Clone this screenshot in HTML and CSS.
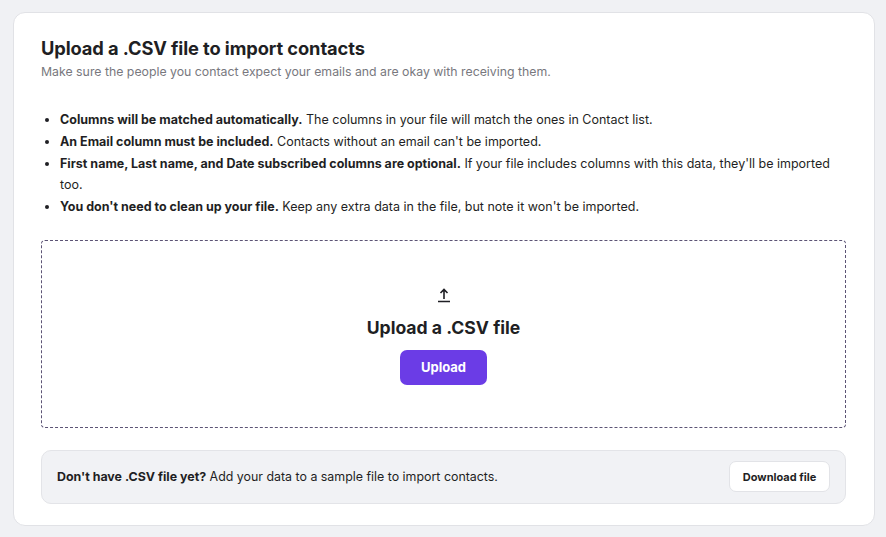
FILE: index.html
```html
<!DOCTYPE html>
<html lang="en">
<head>
<meta charset="utf-8">
<title>Import contacts</title>
<link rel="stylesheet" href="styles.css">
</head>
<body>
<main class="card">
  <h1 class="title">Upload a .CSV file to import contacts</h1>
  <p class="subtitle">Make sure the people you contact expect your emails and are okay with receiving them.</p>
  <ul class="rules">
    <li><b>Columns will be matched automatically.</b> The columns in your file will match the ones in Contact list.</li>
    <li><b>An Email column must be included.</b> Contacts without an email can't be imported.</li>
    <li><b>First name, Last name, and Date subscribed columns are optional.</b> If your file includes columns with this data, they'll be imported too.</li>
    <li><b>You don't need to clean up your file.</b> Keep any extra data in the file, but note it won't be imported.</li>
  </ul>
  <section class="dropzone">
    <svg class="up-icon" width="16" height="16" viewBox="0 0 16 16" aria-hidden="true">
      <path d="M8 12V2.5M4.5 6L8 2.5L11.5 6M2 14.5H14" fill="none" stroke="#1f1f24" stroke-width="1.6" stroke-linecap="butt" stroke-linejoin="miter"/>
    </svg>
    <div class="drop-title">Upload a .CSV file</div>
    <button class="btn-primary" type="button">Upload</button>
  </section>
  <section class="sample">
    <p class="sample-text"><b>Don't have .CSV file yet?</b> Add your data to a sample file to import contacts.</p>
    <button class="btn-secondary" type="button">Download file</button>
  </section>
</main>
</body>
</html>
```
FILE: styles.css
```css
* { box-sizing: border-box; }
html, body { margin: 0; }
body {
  background: #f0f1f4;
  padding: 12px 11px 11px 13px;
  font-family: Inter, "DejaVu Sans", sans-serif;
  color: #1f1f24;
}
.card {
  background: #fff;
  border: 1px solid #e1e2e6;
  border-radius: 12px;
  padding: 23px 28px 20px 27px;
  height: 514px;
}
.title {
  margin: 0;
  font-size: 18.3px;
  line-height: 24px;
  font-weight: 700;
  letter-spacing: -0.1px;
}
.subtitle {
  margin: 2px 0 0;
  font-size: 12.3px;
  line-height: 20px;
  color: #78787e;
}
.rules {
  margin: 27px 0 0;
  padding-left: 19px;
  font-size: 12.5px;
  line-height: 21.75px;
}
.rules b { font-weight: 700; }
.dropzone {
  margin-top: 22px;
  height: 188px;
  border: 1px dashed #5c5475;
  border-radius: 4px;
  display: flex;
  flex-direction: column;
  align-items: center;
  justify-content: center;
  padding-top: 4px;
}
.up-icon { display: block; }
.drop-title {
  margin-top: 13px;
  font-size: 17.6px;
  line-height: 24px;
  font-weight: 700;
}
.btn-primary {
  margin-top: 10px;
  width: 87px;
  height: 35px;
  border: 0;
  border-radius: 7px;
  background: #6b3ce6;
  color: #fff;
  font-family: inherit;
  font-size: 13px;
  font-weight: 700;
}
.sample {
  margin-top: 22px;
  height: 54px;
  background: #f1f2f5;
  border: 1px solid #e3e4e8;
  border-radius: 10px;
  display: flex;
  align-items: center;
  justify-content: space-between;
  padding: 0 15px 0 15px;
}
.sample-text {
  margin: 0;
  font-size: 12.4px;
}
.btn-secondary {
  width: 101px;
  height: 31px;
  background: #fff;
  border: 1px solid #e2e3e7;
  border-radius: 7px;
  color: #1f1f24;
  font-family: inherit;
  font-size: 11px;
  font-weight: 700;
}
```
